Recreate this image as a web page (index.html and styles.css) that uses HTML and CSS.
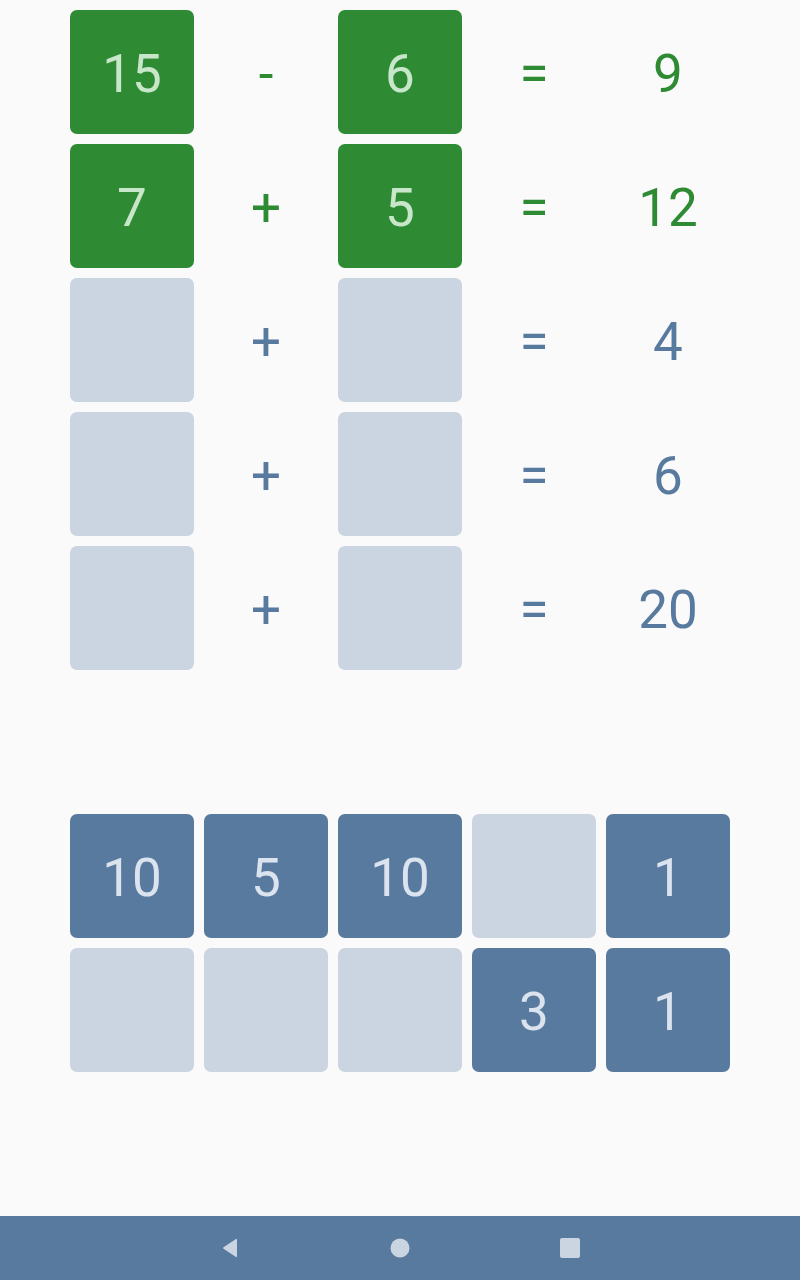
FILE: index.html
```html
<!DOCTYPE html>
<html lang="en">

<head>
  <meta charset="UTF-8">
  <title>Number puzzle</title>
  <meta name="viewport" content="width=device-width, initial-scale=1.0">
  <link rel="stylesheet" href="styles.css">
</head>

<body>

  <div class="app">
    <!-- equations -->
    <div class="board">
      <div class="tile done">15</div>
      <div class="op done-text">-</div>
      <div class="tile done">6</div>
      <div class="op done-text">=</div>
      <div class="result done-text">9</div>

      <div class="tile done">7</div>
      <div class="op done-text">+</div>
      <div class="tile done">5</div>
      <div class="op done-text">=</div>
      <div class="result done-text">12</div>

      <div class="tile empty"></div>
      <div class="op">+</div>
      <div class="tile empty"></div>
      <div class="op">=</div>
      <div class="result">4</div>

      <div class="tile empty"></div>
      <div class="op">+</div>
      <div class="tile empty"></div>
      <div class="op">=</div>
      <div class="result">6</div>

      <div class="tile empty"></div>
      <div class="op">+</div>
      <div class="tile empty"></div>
      <div class="op">=</div>
      <div class="result">20</div>
    </div>

    <!-- number pool -->
    <div class="board pool">
      <div class="tile num">10</div>
      <div class="tile num">5</div>
      <div class="tile num">10</div>
      <div class="tile empty"></div>
      <div class="tile num">1</div>

      <div class="tile empty"></div>
      <div class="tile empty"></div>
      <div class="tile empty"></div>
      <div class="tile num">3</div>
      <div class="tile num">1</div>
    </div>
  </div>

  <div class="navbar">
    <svg width="24" height="24" viewBox="0 0 24 24">
      <path d="M19 3.5 L19 20.5 Q19 21.5 18 21 L5.5 12.8 Q4.6 12 5.5 11.2 L18 3 Q19 2.5 19 3.5 Z" fill="#cbd5e1" />
    </svg>
    <svg width="24" height="24" viewBox="0 0 24 24">
      <circle cx="12" cy="12" r="9.5" fill="#cbd5e1" />
    </svg>
    <svg width="24" height="24" viewBox="0 0 24 24">
      <rect x="2" y="2" width="20" height="20" rx="2" fill="#cbd5e1" />
    </svg>
  </div>

</body>

</html>
```

FILE: styles.css
```css
body {
  margin: 0;
  background: #fafafa;
  font-family: Roboto, "Noto Sans", sans-serif;
  height: 1280px;
  overflow: hidden;
}

.app {
  padding: 10px 70px 0;
}

.board {
  display: grid;
  grid-template-columns: repeat(5, 124px);
  grid-auto-rows: 124px;
  gap: 10px;
}

.pool {
  margin-top: 144px;
}

.tile,
.op,
.result {
  display: flex;
  align-items: center;
  justify-content: center;
  padding-top: 4px;
  box-sizing: border-box;
}

.tile {
  border-radius: 7px;
  font-size: 53px;
}

.tile.done {
  background: #2e8b33;
  color: #c8e6c9;
}

.tile.num {
  background: #587a9f;
  color: #dbe3ee;
}

.tile.empty {
  background: #cbd5e1;
}

.op,
.result {
  color: #587a9f;
  font-size: 53px;
}

.done-text {
  color: #2e8b33;
}

.navbar {
  position: fixed;
  left: 0;
  right: 0;
  bottom: 0;
  height: 64px;
  background: #587a9f;
  display: flex;
  align-items: center;
  justify-content: center;
  gap: 146px;
}
```
